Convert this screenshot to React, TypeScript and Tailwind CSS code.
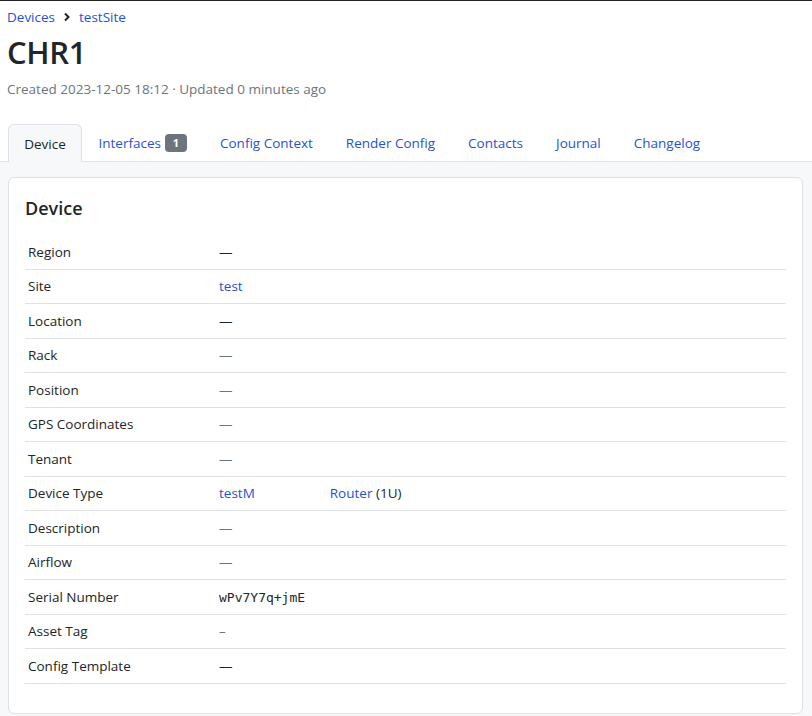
import React from "react";

const rows: { label: string; value: React.ReactNode }[] = [
  { label: "Region", value: <span>—</span> },
  { label: "Site", value: <span className="text-[#1f52d6]">test</span> },
  { label: "Location", value: <span>—</span> },
  { label: "Rack", value: <span className="text-[#6c757d]">—</span> },
  { label: "Position", value: <span className="text-[#6c757d]">—</span> },
  { label: "GPS Coordinates", value: <span className="text-[#6c757d]">—</span> },
  { label: "Tenant", value: <span className="text-[#6c757d]">—</span> },
  {
    label: "Device Type",
    value: (
      <span>
        <span className="text-[#1f52d6]">testM</span>
        <span className="inline-block w-[75px]"></span>
        <span className="text-[#1f52d6]">Router</span> (1U)
      </span>
    ),
  },
  { label: "Description", value: <span className="text-[#6c757d]">—</span> },
  { label: "Airflow", value: <span className="text-[#6c757d]">—</span> },
  {
    label: "Serial Number",
    value: <span className="font-['DejaVu_Sans_Mono',monospace] text-[13px]">wPv7Y7q+jmE</span>,
  },
  { label: "Asset Tag", value: <span className="text-[#6c757d]">–</span> },
  { label: "Config Template", value: <span>—</span> },
];

const tabs = ["Interfaces", "Config Context", "Render Config", "Contacts", "Journal", "Changelog"];

export default function App() {
  return (
    <div className="w-[812px] h-[716px] overflow-hidden bg-white font-['Open_Sans',sans-serif] text-[#212529] text-[13.5px] border-t border-[#222]">
      <div className="px-[7px]">
        <div className="flex items-center gap-[8px] pt-[8px] h-[24px] text-[#1f52d6]">
          <span>Devices</span>
          <svg width="8" height="10" viewBox="0 0 8 10">
            <path d="M2 1.5 L5.5 5 L2 8.5" stroke="#212529" strokeWidth="2" fill="none" />
          </svg>
          <span>testSite</span>
        </div>
        <h1 className="text-[31px] font-semibold leading-[38px] mt-[8px] tracking-[-0.3px]">CHR1</h1>
        <div className="text-[#6c757d] mt-[9px] leading-[18px]">Created 2023-12-05 18:12 · Updated 0 minutes ago</div>
      </div>
      <div className="mt-[26px] flex items-end border-b border-[#dee2e6] h-[38px] pl-[8px]">
        <div className="h-[38px] w-[74px] -mb-px flex items-center justify-center pt-[1px] rounded-t-[6px] border border-b-0 border-[#dee2e6] bg-[#f6f8fa]">
          Device
        </div>
        {tabs.map((t) => (
          <div key={t} className="h-[37px] flex items-center pt-[1px] px-[16.5px] text-[#1f52d6]">
            {t}
            {t === "Interfaces" && (
              <span className="ml-[4px] inline-flex items-center justify-center w-[22px] h-[18px] rounded-[4px] bg-[#6c757d] text-white text-[11px] font-bold">
                1
              </span>
            )}
          </div>
        ))}
      </div>
      <div className="bg-[#f6f8fa] h-[560px] pt-[15px] px-[8px] pr-[9px]">
        <div className="bg-white border border-[#dee2e6] rounded-[6px] h-[537px] px-[16px] pt-[18px]">
          <div className="text-[18px] font-semibold leading-[24px] mb-[15px]">Device</div>
          <div>
            {rows.map((r) => (
              <div key={r.label} className="flex items-center h-[34.5px] border-b border-[#dee2e6]">
                <div className="w-[194px] pl-[3px]">{r.label}</div>
                <div>{r.value}</div>
              </div>
            ))}
          </div>
        </div>
      </div>
    </div>
  );
}
